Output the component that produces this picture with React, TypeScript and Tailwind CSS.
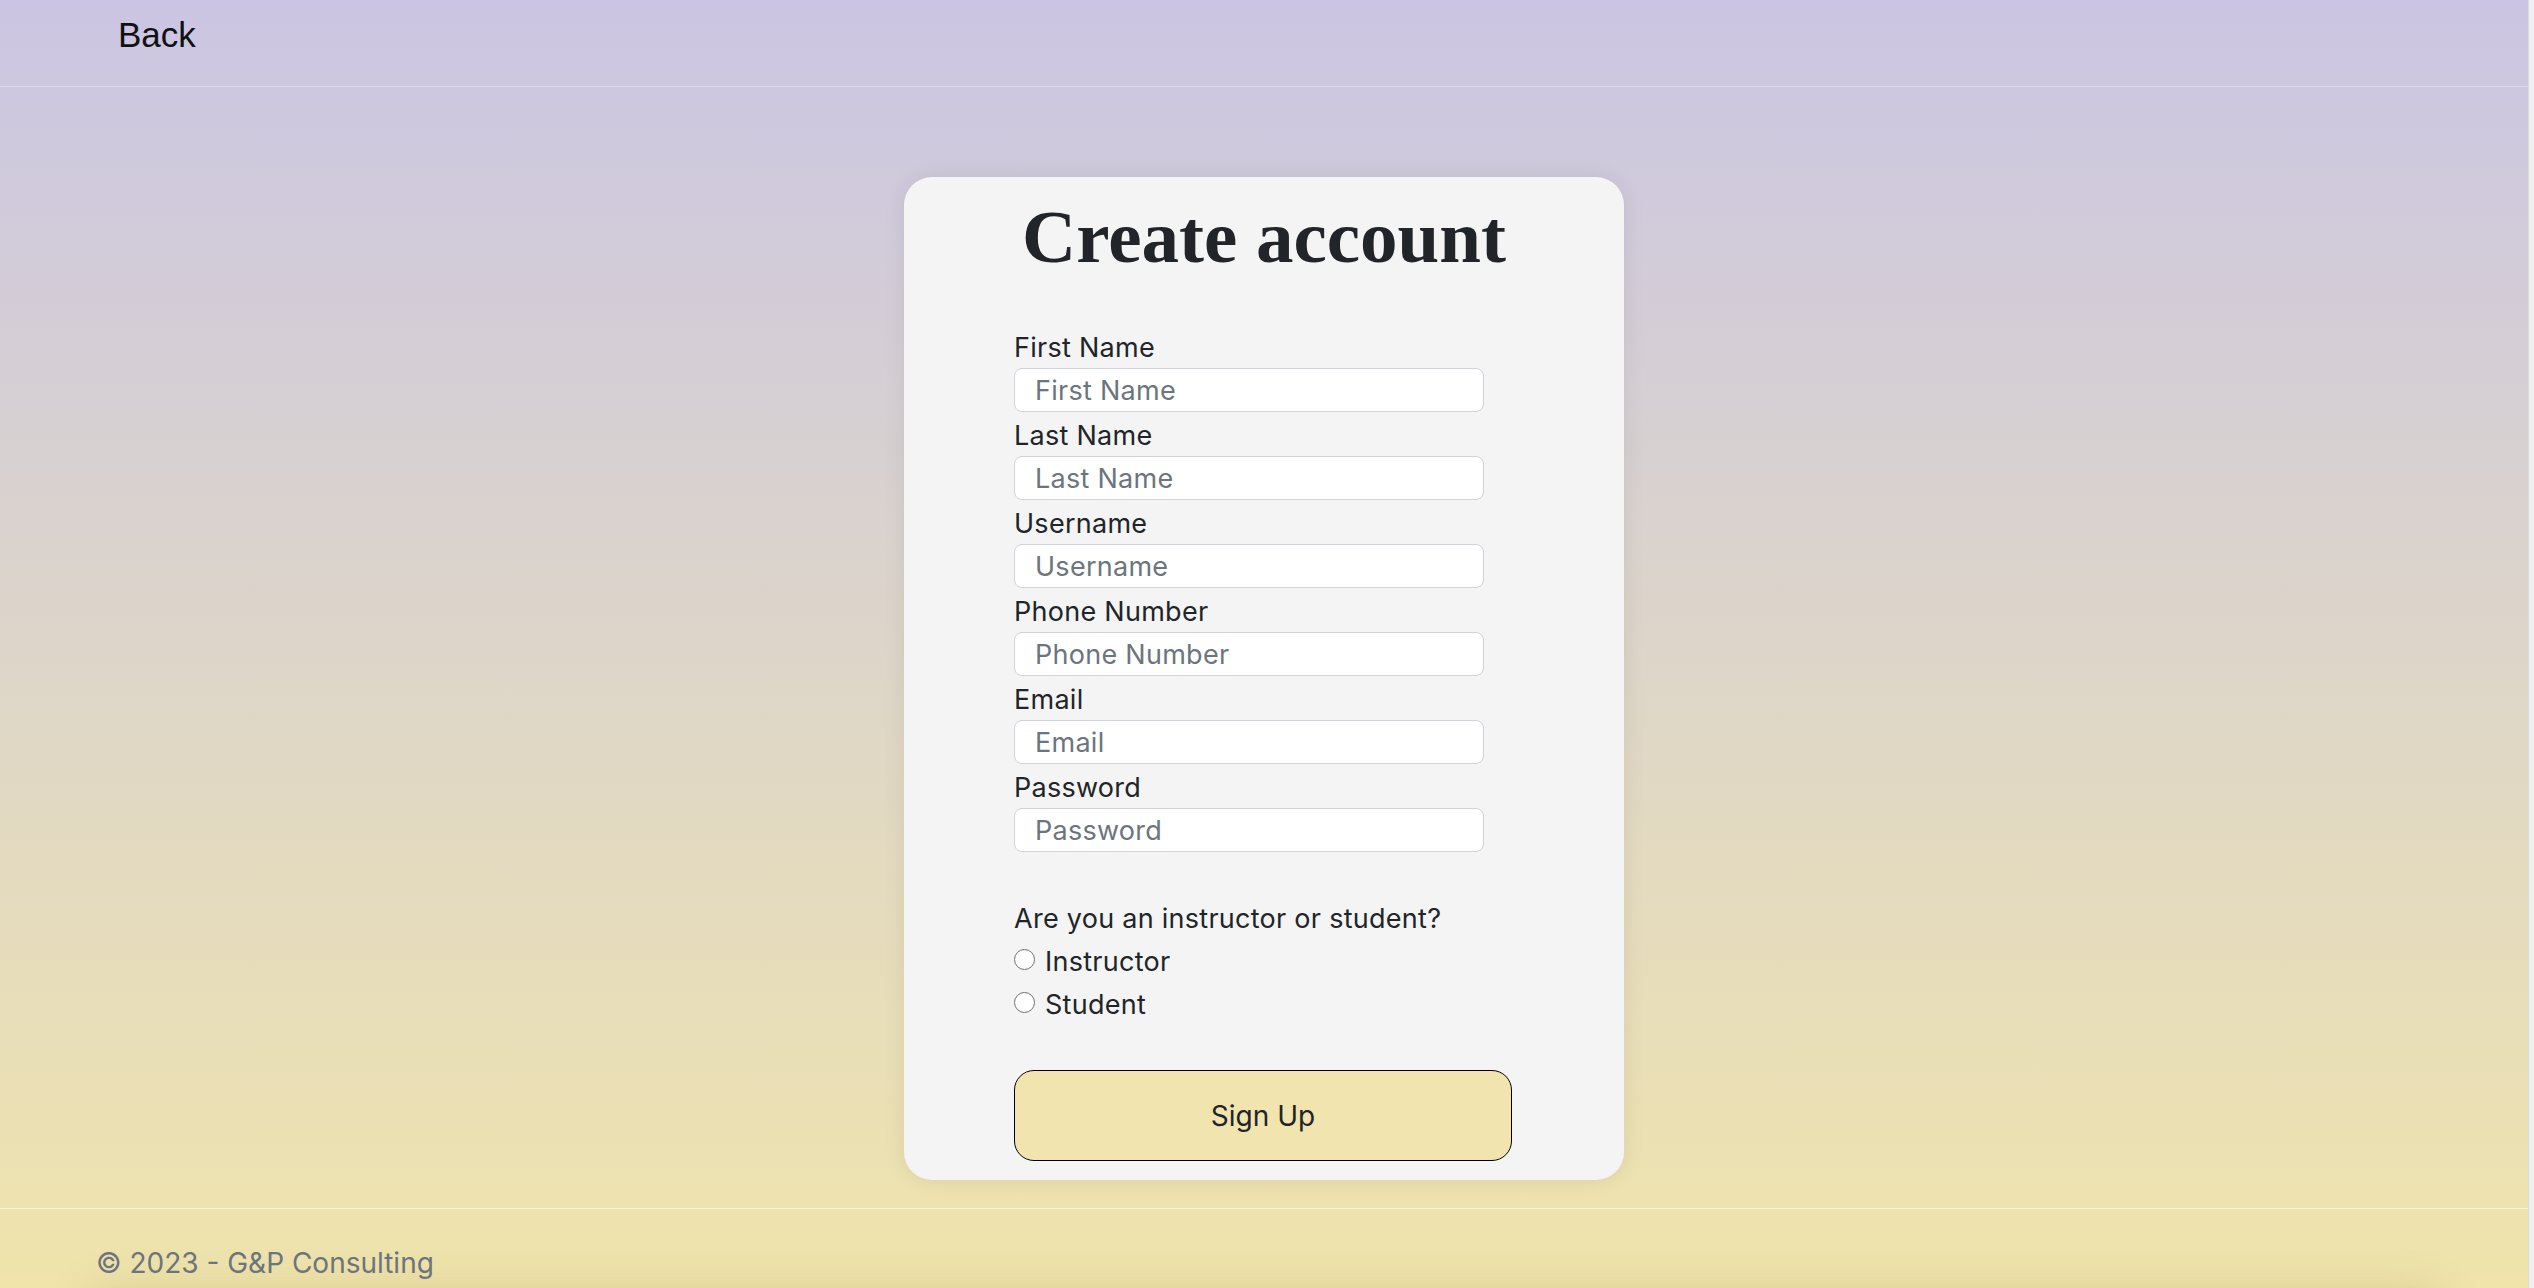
import { useState } from 'react';

const fields = [
  { label: 'First Name', type: 'text' },
  { label: 'Last Name', type: 'text' },
  { label: 'Username', type: 'text' },
  { label: 'Phone Number', type: 'tel' },
  { label: 'Email', type: 'email' },
  { label: 'Password', type: 'password' },
];

function SignUpCard() {
  const [role, setRole] = useState('');

  return (
    <div className="w-[720px] rounded-[28px] bg-[#f4f4f4] px-[110px] pt-[15px] pb-[19px] shadow-[0_0_22px_rgba(0,0,0,0.08)]">
      <h1 className="text-center font-['Liberation_Serif',serif] text-[75px] font-bold leading-[90px] text-[#212529]">
        Create account
      </h1>

      <form className="mt-[46px] font-['Inter',sans-serif] text-[27px] tracking-[0.01em] text-[#212529]">
        {fields.map((f) => (
          <div key={f.label} className="mb-[4px]">
            <label className="block leading-[40px]">{f.label}</label>
            <input
              type={f.type}
              placeholder={f.label}
              className="block h-[44px] w-[470px] rounded-[8px] border border-[#ced4da] bg-white pl-[20px] text-[27px] outline-none placeholder:text-[#6c757d]"
            />
          </div>
        ))}

        {/* Role picker */}
        <div className="mt-[47px] flex flex-col gap-[3px]">
          <p className="leading-[40px]">Are you an instructor or student?</p>
          {['Instructor', 'Student'].map((r) => (
            <label key={r} className="flex items-center leading-[40px]">
              <input
                type="radio"
                name="role"
                checked={role === r}
                onChange={() => setRole(r)}
                className="mr-[10px] mb-[6px] h-[21px] w-[21px] appearance-none rounded-full border border-[#6f6f6f] bg-white"
              />
              {r}
            </label>
          ))}
        </div>

        <button
          type="button"
          className="mt-[45px] h-[91px] w-[498px] rounded-[20px] border-[1.5px] border-black bg-[#f2e4ae] text-[28px] tracking-normal text-[#212529]"
        >
          Sign Up
        </button>
      </form>
    </div>
  );
}

export default function App() {
  return (
    <div className="flex h-[1288px] overflow-hidden">
      <div className="flex flex-1 flex-col overflow-hidden bg-gradient-to-b from-[#cbc5e3] to-[#f0e4ab]">
        <header className="h-[87px] shrink-0 border-b border-[#dedae8] pt-[17px] pl-[118px]">
          <a href="#" className="font-['Liberation_Sans',sans-serif] text-[35px] leading-[36px] text-[#111]">
            Back
          </a>
        </header>

        <main className="flex shrink-0 justify-center pt-[90px]">
          <SignUpCard />
        </main>

        <footer className="mt-[28px] shrink-0 border-t border-white/60 pt-[33px]">
          <p className="pl-[96px] font-['Inter',sans-serif] text-[28px] leading-[42px] text-[#6c757d]">
            © 2023 - G&amp;P Consulting
          </p>
          <div className="mx-[90px] mt-[10px] h-[200px] shadow-[0_0_45px_rgba(90,70,0,0.16)]" />
        </footer>
      </div>
      <div className="w-[6px] shrink-0 border-l border-[#dcdcdc] bg-[#efefef]" />
    </div>
  );
}
